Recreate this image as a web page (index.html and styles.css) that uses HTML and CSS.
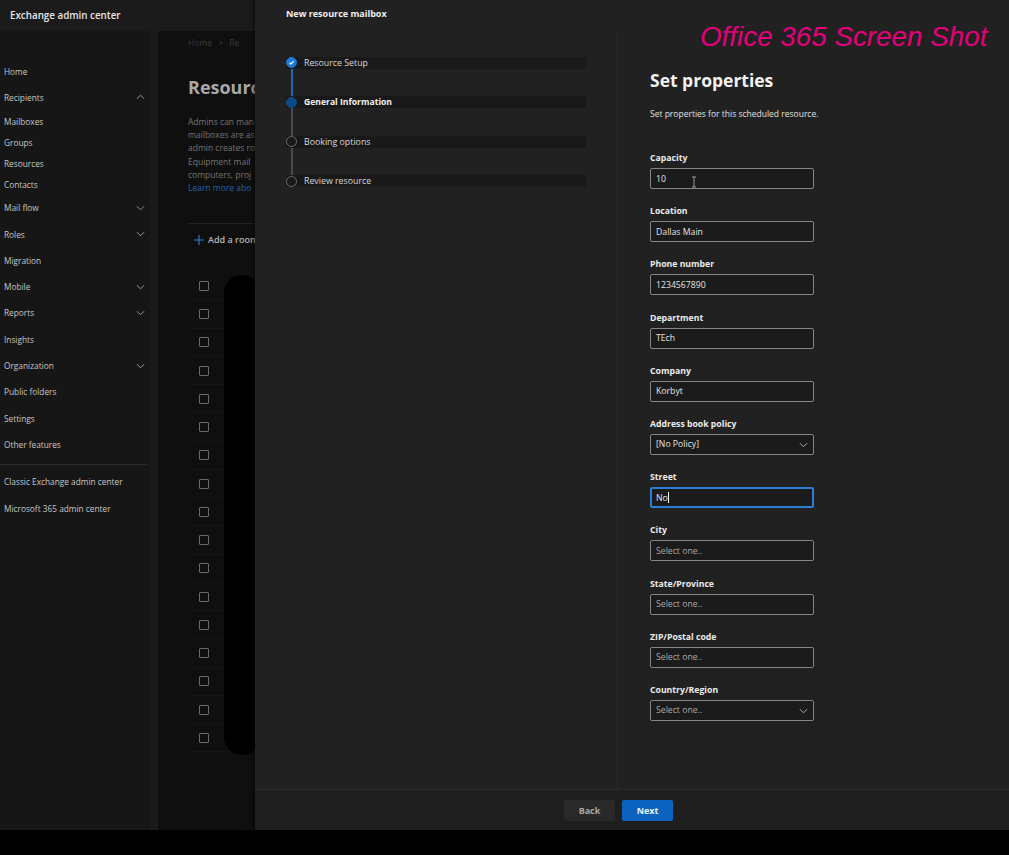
FILE: index.html
```html
<!DOCTYPE html>
<html lang="en">
<head>
<meta charset="utf-8">
<title>Exchange admin center - New resource mailbox</title>
<link rel="stylesheet" href="styles.css">
</head>
<body>
<div class="screen">
  <div class="app">
    <header class="topbar"><span class="brand">Exchange admin center</span></header>
    <div class="body">
      <nav class="nav">
        <div class="nav-item">Home</div>
        <div class="nav-item">Recipients<svg class="chev" viewBox="0 0 10 6"><path d="M1 5l4-4 4 4"/></svg></div>
        <div class="nav-sub">Mailboxes</div>
        <div class="nav-sub">Groups</div>
        <div class="nav-sub">Resources</div>
        <div class="nav-sub">Contacts</div>
        <div class="nav-item">Mail flow<svg class="chev" viewBox="0 0 10 6"><path d="M1 1l4 4 4-4"/></svg></div>
        <div class="nav-item">Roles<svg class="chev" viewBox="0 0 10 6"><path d="M1 1l4 4 4-4"/></svg></div>
        <div class="nav-item">Migration</div>
        <div class="nav-item">Mobile<svg class="chev" viewBox="0 0 10 6"><path d="M1 1l4 4 4-4"/></svg></div>
        <div class="nav-item">Reports<svg class="chev" viewBox="0 0 10 6"><path d="M1 1l4 4 4-4"/></svg></div>
        <div class="nav-item">Insights</div>
        <div class="nav-item">Organization<svg class="chev" viewBox="0 0 10 6"><path d="M1 1l4 4 4-4"/></svg></div>
        <div class="nav-item">Public folders</div>
        <div class="nav-item">Settings</div>
        <div class="nav-item">Other features</div>
        <div class="nav-divider"></div>
        <div class="nav-item">Classic Exchange admin center</div>
        <div class="nav-item">Microsoft 365 admin center</div>
      </nav>
      <main class="main">
        <div class="crumb">Home <span class="sep">&gt;</span> Re</div>
        <h1 class="page-title">Resourc</h1>
        <p class="intro">Admins can man<br>mailboxes are as<br>admin creates ro<br>Equipment mail<br>computers, proj<br><span class="link">Learn more abo</span></p>
        <div class="cmdbar"><svg class="plus" viewBox="0 0 12 12"><path d="M6 0v12M0 6h12"/></svg><span>Add a room</span></div>
        <div class="list">
          <div class="row"><span class="cb"></span></div>
          <div class="row"><span class="cb"></span></div>
          <div class="row"><span class="cb"></span></div>
          <div class="row"><span class="cb"></span></div>
          <div class="row"><span class="cb"></span></div>
          <div class="row"><span class="cb"></span></div>
          <div class="row"><span class="cb"></span></div>
          <div class="row"><span class="cb"></span></div>
          <div class="row"><span class="cb"></span></div>
          <div class="row"><span class="cb"></span></div>
          <div class="row"><span class="cb"></span></div>
          <div class="row"><span class="cb"></span></div>
          <div class="row"><span class="cb"></span></div>
          <div class="row"><span class="cb"></span></div>
          <div class="row"><span class="cb"></span></div>
          <div class="row"><span class="cb"></span></div>
          <div class="row"><span class="cb"></span></div>
        </div>
        <div class="redact"></div>
      </main>
    </div>
  </div>

  <aside class="panel">
    <div class="panel-title">New resource mailbox</div>
    <div class="panel-body">
      <div class="steps">
        <div class="step done">
          <span class="dot"><svg viewBox="0 0 11 11"><path d="M3 5.7l1.8 1.8 3.3-3.6"/></svg></span>
          <span class="step-label">Resource Setup</span>
        </div>
        <div class="connector blue"></div>
        <div class="step current">
          <span class="dot"></span>
          <span class="step-label">General Information</span>
        </div>
        <div class="connector"></div>
        <div class="step">
          <span class="dot"></span>
          <span class="step-label">Booking options</span>
        </div>
        <div class="connector"></div>
        <div class="step">
          <span class="dot"></span>
          <span class="step-label">Review resource</span>
        </div>
      </div>

      <div class="form">
        <h2 class="form-title">Set properties</h2>
        <p class="form-desc">Set properties for this scheduled resource.</p>

        <div class="field">
          <div class="label">Capacity</div>
          <div class="box">10<svg class="ibeam" viewBox="0 0 6 12"><path d="M1 1h4M3 1v10M1 11h4"/></svg></div>
        </div>
        <div class="field">
          <div class="label">Location</div>
          <div class="box">Dallas Main</div>
        </div>
        <div class="field">
          <div class="label">Phone number</div>
          <div class="box">1234567890</div>
        </div>
        <div class="field">
          <div class="label">Department</div>
          <div class="box">TEch</div>
        </div>
        <div class="field">
          <div class="label">Company</div>
          <div class="box">Korbyt</div>
        </div>
        <div class="field">
          <div class="label">Address book policy</div>
          <div class="box select">[No Policy]<svg class="dd" viewBox="0 0 10 6"><path d="M1 1l4 4 4-4"/></svg></div>
        </div>
        <div class="field">
          <div class="label">Street</div>
          <div class="box focused">No<span class="caret"></span></div>
        </div>
        <div class="field">
          <div class="label">City</div>
          <div class="box placeholder">Select one..</div>
        </div>
        <div class="field">
          <div class="label">State/Province</div>
          <div class="box placeholder">Select one..</div>
        </div>
        <div class="field">
          <div class="label">ZIP/Postal code</div>
          <div class="box placeholder">Select one..</div>
        </div>
        <div class="field">
          <div class="label">Country/Region</div>
          <div class="box select placeholder">Select one..<svg class="dd" viewBox="0 0 10 6"><path d="M1 1l4 4 4-4"/></svg></div>
        </div>
      </div>
    </div>
    <div class="panel-footer">
      <button class="btn back">Back</button>
      <button class="btn next">Next</button>
    </div>
    <div class="watermark">Office 365 Screen Shot</div>
  </aside>
</div>
</body>
</html>
```

FILE: styles.css
```css
* { box-sizing: border-box; }
html, body { margin: 0; padding: 0; }
body {
  width: 1009px;
  height: 855px;
  background: #000;
  font-family: "Open Sans", "Noto Sans", sans-serif;
  color: #d0d0d0;
  overflow: hidden;
}
.screen {
  position: relative;
  width: 1009px;
  height: 830px;
  overflow: hidden;
}
.app {
  display: flex;
  flex-direction: column;
  height: 830px;
}
.topbar {
  height: 31px;
  background: #1b1b1b;
  display: flex;
  align-items: center;
  padding-left: 10px;
  flex: none;
}
.brand {
  font-size: 9.8px;
  font-weight: 600;
  color: #e6e6e6;
}
.body {
  flex: 1;
  display: flex;
  min-height: 0;
  background: #0f0f0f;
}
.nav {
  width: 150px;
  flex: none;
  background: #161616;
  padding-top: 27px;
  border-right: 8px solid #1a1a1a;
  box-sizing: content-box;
}
.nav-item, .nav-sub {
  display: flex;
  align-items: center;
  justify-content: space-between;
  padding: 0 5px 0 4px;
  font-size: 8.3px;
  color: #c6c6c6;
  white-space: nowrap;
}
.nav-item { height: 26.3px; }
.nav-sub { height: 21px; }
.chev {
  width: 9px;
  height: 6px;
  fill: none;
  stroke: #9a9a9a;
  stroke-width: 1.1;
}
.nav-divider {
  height: 1px;
  width: 147px;
  background: #2c2c2c;
  margin: 6px 0 4px;
}
.main {
  position: relative;
  flex: 1;
  background: #0f0f0f;
  padding: 6px 0 0 30px;
}
.crumb {
  font-size: 8.5px;
  line-height: 12px;
  color: #3a3a3a;
  white-space: nowrap;
}
.crumb .sep { margin: 0 4px; }
.page-title {
  margin: 26px 0 0;
  font-size: 18px;
  line-height: 24px;
  font-weight: 700;
  color: #a8a8a8;
  white-space: nowrap;
}
.intro {
  margin: 16px 0 0;
  font-size: 8.5px;
  line-height: 13.2px;
  color: #747474;
  white-space: nowrap;
}
.intro .link { color: #2463a8; }
.cmdbar {
  margin-top: 29px;
  height: 32px;
  width: 80px;
  border-top: 1px solid #232323;
  display: flex;
  align-items: center;
  padding-left: 6px;
  font-size: 9px;
  font-weight: 600;
  color: #b8b8b8;
  white-space: nowrap;
}
.plus {
  width: 10px;
  height: 10px;
  stroke: #2f7fd0;
  stroke-width: 1.4;
  margin-right: 4px;
  flex: none;
}
.list { margin-top: 17px; width: 80px; }
.row {
  height: 28.25px;
  display: flex;
  align-items: center;
  padding-left: 11px;
  border-bottom: 1px solid #161616;
}
.cb {
  width: 10px;
  height: 10px;
  border: 1px solid #6a6a6a;
  border-radius: 1px;
}
.redact {
  position: absolute;
  left: 66px;
  top: 244px;
  width: 36px;
  height: 480px;
  background: #000;
  border-radius: 18px;
}

/* Panel */
.panel {
  position: absolute;
  left: 255px;
  top: 0;
  right: 0;
  bottom: 0;
  background: #212121;
  display: flex;
  flex-direction: column;
  box-shadow: -2px 0 4px rgba(0,0,0,0.5);
}
.panel-title {
  height: 30px;
  padding: 8px 0 0 31px;
  font-size: 9px;
  line-height: 12px;
  font-weight: 700;
  color: #f0f0f0;
  flex: none;
}
.panel-body {
  flex: 1;
  display: flex;
  min-height: 0;
}
.steps {
  width: 363px;
  flex: none;
  border-right: 1px solid #2a2a2a;
  padding: 26.5px 0 0 31px;
}
.step {
  display: flex;
  align-items: center;
  height: 12px;
  width: 300px;
  background: #191919;
}
.dot {
  width: 11px;
  height: 11px;
  border-radius: 50%;
  border: 1px solid #6a6a6a;
  background: #1a1a1a;
  flex: none;
  display: flex;
}
.dot svg {
  width: 100%;
  height: 100%;
  fill: none;
  stroke: #fff;
  stroke-width: 1.4;
}
.step.done .dot { background: #1b7ad6; border-color: #1b7ad6; }
.step.current .dot { background: #0c4a88; border-color: #0c4a88; }
.step-label {
  margin-left: 7px;
  font-size: 8.8px;
  line-height: 12px;
  color: #d8d8d8;
  white-space: nowrap;
}
.step.current .step-label { font-weight: 700; color: #f2f2f2; font-size: 8.6px; }
.connector {
  width: 2px;
  height: 27.5px;
  margin-left: 4.5px;
  background: #4a4a4a;
}
.connector.blue { background: #1c68b8; }

.form {
  flex: 1;
  padding: 38px 0 0 32px;
}
.form-title {
  margin: 0;
  font-size: 17.5px;
  line-height: 24px;
  font-weight: 700;
  color: #f2f2f2;
  white-space: nowrap;
}
.form-desc {
  margin: 16px 0 0;
  font-size: 8.5px;
  line-height: 12px;
  color: #e0e0e0;
  white-space: nowrap;
}
.form-desc + .field { margin-top: 32px; }
.field { margin-bottom: 16.2px; width: 164px; }
.label {
  font-size: 8.7px;
  line-height: 12px;
  font-weight: 700;
  color: #ececec;
  margin-bottom: 4px;
  white-space: nowrap;
}
.box {
  position: relative;
  height: 21px;
  border: 1px solid #858585;
  border-radius: 2px;
  background: #1b1b1b;
  display: flex;
  align-items: center;
  padding-left: 5px;
  font-size: 8.7px;
  color: #e4e4e4;
}
.box.placeholder { color: #a8a8a8; }
.box.focused { border: 2px solid #2a7fd4; padding-left: 4px; }
.caret {
  display: inline-block;
  width: 1px;
  height: 11px;
  background: #fff;
  margin-left: 0.5px;
}
.dd {
  position: absolute;
  right: 5px;
  top: 7px;
  width: 9px;
  height: 6px;
  fill: none;
  stroke: #b0b0b0;
  stroke-width: 1.1;
}
.ibeam {
  position: absolute;
  left: 40px;
  top: 7px;
  width: 6px;
  height: 12px;
  fill: none;
  stroke: #9a9a9a;
  stroke-width: 1;
}
.panel-footer {
  height: 41px;
  flex: none;
  border-top: 1px solid #2a2a2a;
  background: #1e1e1e;
  display: flex;
  align-items: center;
  gap: 7px;
  padding-left: 309px;
}
.btn {
  height: 21px;
  width: 51px;
  border: none;
  border-radius: 2px;
  font-family: inherit;
  font-size: 9px;
  font-weight: 700;
  padding: 0;
}
.btn.back { background: #292929; color: #a8a8a8; }
.btn.next { background: #0b63bf; color: #eaf2fb; }
.watermark {
  position: absolute;
  left: 445px;
  top: 21px;
  font-family: "Liberation Sans", Arial, sans-serif;
  font-style: italic;
  font-size: 27.8px;
  line-height: 32px;
  color: #e3007c;
  white-space: nowrap;
}
```
